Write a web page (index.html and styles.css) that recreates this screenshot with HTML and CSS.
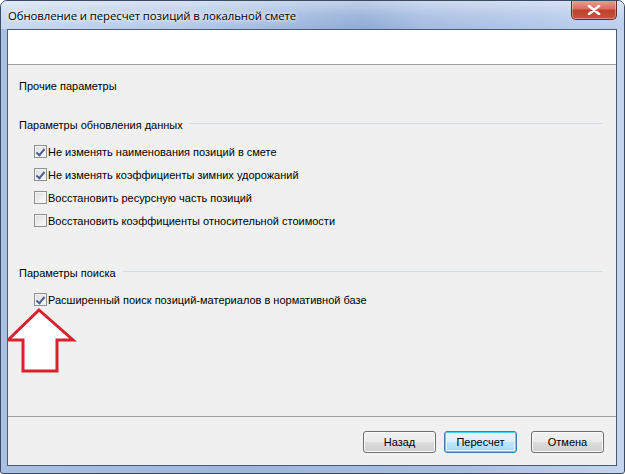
FILE: index.html
```html
<!DOCTYPE html>
<html lang="ru">
<head>
<meta charset="utf-8">
<title>Обновление и пересчет позиций в локальной смете</title>
<link rel="stylesheet" href="styles.css">
</head>
<body>
<div class="window">
  <div class="titlebar">
    <span class="title">Обновление и пересчет позиций в локальной смете</span>
    <div class="close">
      <svg width="16" height="10" viewBox="0 0 16 10"><path d="M3 1 L13 9 M13 1 L3 9" stroke="#fff" stroke-width="2.6" stroke-linecap="round"/></svg>
    </div>
  </div>
  <div class="client">
    <div class="header"></div>
    <div class="content">
      <div class="section-title">Прочие параметры</div>
      <div class="group">
        <div class="group-head"><span>Параметры обновления данных</span><i class="rule"></i></div>
        <label class="row"><span class="cb checked"></span>Не изменять наименования позиций в смете</label>
        <label class="row"><span class="cb checked"></span>Не изменять коэффициенты зимних удорожаний</label>
        <label class="row"><span class="cb"></span>Восстановить ресурсную часть позиций</label>
        <label class="row"><span class="cb"></span>Восстановить коэффициенты относительной стоимости</label>
      </div>
      <div class="group group-search">
        <div class="group-head"><span>Параметры поиска</span><i class="rule"></i></div>
        <label class="row"><span class="cb checked"></span>Расширенный поиск позиций-материалов в нормативной базе</label>
      </div>
    </div>
    <div class="footer">
      <button class="btn btn-back">Назад</button>
      <button class="btn default">Пересчет</button>
      <button class="btn">Отмена</button>
    </div>
  </div>
  <svg class="arrow" width="70" height="66" viewBox="0 0 70 66">
    <path d="M32 2 L66 32 L50 32 L50 63 L16 63 L16 32 L1 32 Z" fill="#ffffff" stroke="#d8212b" stroke-width="3" stroke-linejoin="miter"/>
  </svg>
</div>
</body>
</html>
```

FILE: styles.css
```css
* { box-sizing: border-box; }
html, body { margin: 0; padding: 0; background: #ffffff; }
body { font-family: "Liberation Sans", Arial, sans-serif; font-size: 11px; color: #000; }

.window {
  position: relative;
  width: 625px;
  height: 474px;
  display: flex;
  flex-direction: column;
  background: linear-gradient(90deg, #a9c0e4 0%, #9db6de 40%, #aac0e3 75%, #c4d5ee 100%);
  border: 1px solid #3b4b63;
  border-radius: 7px 7px 3px 3px;
  overflow: hidden;
}

.titlebar {
  height: 28px;
  flex: none;
  display: flex;
  align-items: flex-start;
  position: relative;
  background:
    linear-gradient(180deg, rgba(255,255,255,0.45) 0%, rgba(255,255,255,0.15) 50%, rgba(255,255,255,0) 100%),
    linear-gradient(90deg, #c7d8ef 0%, #b3c8e8 30%, #8fabd8 58%, #a3bbe2 68%, #bccfec 100%);
}
.title {
  margin: 8px 0 0 7px;
  font-family: "Open Sans", "Noto Sans", sans-serif;
  font-size: 11.4px;
  line-height: 14px;
  letter-spacing: -0.1px;
  color: #000;
  text-shadow: 0 0 6px #ffffff, 0 0 3px #ffffff;
}
.close {
  position: absolute;
  right: 7px;
  top: -1px;
  width: 46px;
  height: 20px;
  border: 1px solid #6b2a24;
  border-top: none;
  border-radius: 0 0 5px 5px;
  background: linear-gradient(180deg, #e9a597 0%, #d7705f 45%, #c0412d 55%, #c8533c 100%);
  box-shadow: inset 0 0 0 1px rgba(255,255,255,0.35);
  display: flex;
  align-items: center;
  justify-content: center;
}

.client {
  flex: 1;
  margin: 0 7px 7px 6px;
  border: 1px solid #4c5b74;
  background: #f0f0f0;
  display: flex;
  flex-direction: column;
}
.header {
  height: 35px;
  flex: none;
  background: #ffffff;
  border-bottom: 1px solid #a0a0a0;
}
.content {
  flex: 1;
  padding: 14px 0 0 11px;
}
.section-title { height: 14px; line-height: 14px; }

.group { margin-top: 25px; }
.group-search { margin-top: 34px; }
.group-head {
  display: flex;
  align-items: center;
  height: 14px;
  line-height: 14px;
  margin-bottom: 8px;
}
.group-head .rule {
  flex: 1;
  height: 1px;
  background: #d5dbe3;
  margin: 0 13px 0 7px;
  position: relative;
  top: -2px;
}
.row {
  display: flex;
  align-items: center;
  height: 23px;
  padding-left: 15px;
}
.cb {
  width: 13px;
  height: 13px;
  margin-right: 1px;
  border: 1px solid #8e8f8f;
  background: linear-gradient(135deg, #dcdcdc 0%, #f0f0f0 60%, #fbfbfb 100%);
  box-shadow: inset 0 0 0 1px #f4f4f4;
  position: relative;
  flex: none;
}
.cb.checked::after {
  content: "";
  position: absolute;
  left: 3px;
  top: 1px;
  width: 3px;
  height: 7px;
  border: solid #4a5e97;
  border-width: 0 2px 2px 0;
  transform: rotate(40deg);
}

.footer {
  height: 49px;
  flex: none;
  border-top: 1px solid #a0a0a0;
  display: flex;
  justify-content: flex-end;
  align-items: flex-start;
  padding: 14px 12px 0 0;
}
.btn {
  width: 73px;
  height: 22px;
  font-family: "Liberation Sans", Arial, sans-serif;
  font-size: 11px;
  color: #000;
  border: 1px solid #707070;
  border-radius: 3px;
  background: linear-gradient(180deg, #f2f2f2 0%, #ebebeb 48%, #dddddd 52%, #cfcfcf 100%);
  box-shadow: inset 0 0 0 1px #fbfbfb;
  padding: 0;
}
.btn-back { margin-right: 8px; }
.btn.default {
  margin-right: 14px;
  border-color: #3c7fb1;
  box-shadow: inset 0 0 0 1px #48d7f8, inset 0 0 0 2px #e7f6fd;
  background: linear-gradient(180deg, #eaf6fd 0%, #d9f0fc 48%, #bee6fd 52%, #a7d9f5 100%);
}

.arrow {
  position: absolute;
  left: 6px;
  top: 307px;
}
```
